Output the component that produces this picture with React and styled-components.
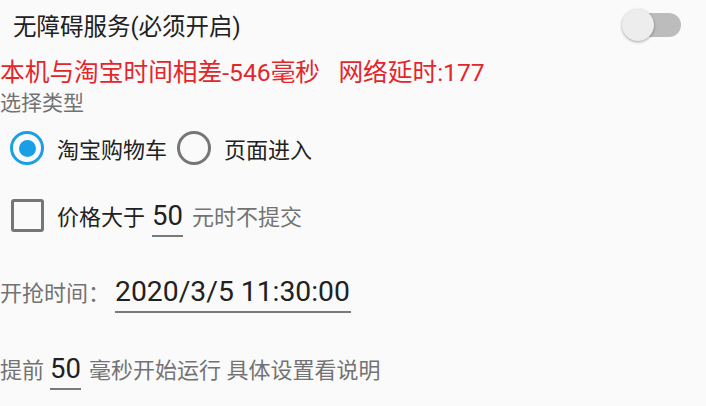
import React from "react";
import styled, { createGlobalStyle } from "styled-components";

const colors = {
  background: "#fafafa",
  text: "#212121",
  hint: "#737373",
  red: "#e3262b",
  accent: "#1a9fe6",
  control: "#767676",
  line: "#7a7a7a",
};

const GlobalStyle = createGlobalStyle`
  html, body {
    margin: 0;
    padding: 0;
    background: ${colors.background};
  }
  body {
    font-family: Roboto, "Noto Sans CJK SC", sans-serif;
    color: ${colors.text};
  }
`;

const Page = styled.div`
  width: 706px;
  height: 406px;
  display: flex;
  flex-direction: column;
  background: ${colors.background};
  overflow: hidden;
`;

const TitleRow = styled.div`
  display: flex;
  align-items: center;
  justify-content: space-between;
  height: 50px;
  padding: 0 24px 0 13px;
`;

const TitleText = styled.span`
  font-size: 23.5px;
  color: ${colors.text};
`;

const SwitchBox = styled.div`
  position: relative;
  width: 60px;
  height: 32px;
`;

const SwitchTrack = styled.div`
  position: absolute;
  left: 8px;
  top: 4px;
  width: 51px;
  height: 24px;
  border-radius: 12px;
  background: #bcbcbc;
`;

const SwitchThumb = styled.div`
  position: absolute;
  left: 0;
  top: 0;
  width: 32px;
  height: 32px;
  border-radius: 50%;
  background: #ededed;
  box-shadow: 0 1px 3px rgba(0, 0, 0, 0.35);
`;

const StatusLine = styled.div`
  margin-top: 8px;
  height: 30px;
  line-height: 30px;
  font-size: 24.7px;
  color: ${colors.red};
  white-space: pre;
`;

const SectionLabel = styled.div`
  height: 30px;
  line-height: 30px;
  font-size: 21px;
  color: ${colors.hint};
`;

const RadioGroup = styled.div`
  display: flex;
  align-items: center;
  gap: 10px;
  margin-top: 9px;
  height: 42px;
  padding-left: 10px;
`;

const RadioOption = styled.label`
  display: flex;
  align-items: center;
  gap: 13px;
  font-size: 22px;
  color: ${colors.text};
`;

const RadioCircle = styled.span`
  box-sizing: border-box;
  width: 34px;
  height: 34px;
  border-radius: 50%;
  border: 3.5px solid ${(p) => (p.checked ? colors.accent : colors.control)};
  display: flex;
  align-items: center;
  justify-content: center;
  &::after {
    content: "";
    width: 17px;
    height: 17px;
    border-radius: 50%;
    background: ${colors.accent};
    display: ${(p) => (p.checked ? "block" : "none")};
  }
`;

const FieldRow = styled.div`
  display: flex;
  align-items: baseline;
  margin-top: ${(p) => p.top}px;
  padding-left: ${(p) => p.left || 0}px;
  font-size: 22px;
`;

const CheckBox = styled.span`
  align-self: flex-start;
  box-sizing: border-box;
  width: 33px;
  height: 33px;
  border: 3.5px solid ${colors.control};
  border-radius: 3px;
  margin-right: 13px;
`;

const Plain = styled.span`
  color: ${(p) => (p.muted ? colors.hint : colors.text)};
  white-space: pre;
`;

// underlined text field, the way an Android EditText draws it
const InputField = styled.span`
  display: inline-block;
  box-sizing: content-box;
  width: ${(p) => p.width}px;
  margin: 0 ${(p) => p.after}px 0 ${(p) => p.before}px;
  padding-bottom: 3px;
  font-size: ${(p) => p.size || 27.5}px;
  line-height: 33px;
  color: ${colors.text};
  border-bottom: 2px solid ${colors.line};
  white-space: pre;
`;

export default function App() {
  return (
    <>
      <GlobalStyle />
      <Page>
        <TitleRow>
          <TitleText>无障碍服务(必须开启)</TitleText>
          <SwitchBox>
            <SwitchTrack />
            <SwitchThumb />
          </SwitchBox>
        </TitleRow>

        <StatusLine>本机与淘宝时间相差-546毫秒   网络延时:177</StatusLine>
        <SectionLabel>选择类型</SectionLabel>

        <RadioGroup>
          <RadioOption>
            <RadioCircle checked />
            淘宝购物车
          </RadioOption>
          <RadioOption>
            <RadioCircle />
            页面进入
          </RadioOption>
        </RadioGroup>

        <FieldRow top={30} left={11}>
          <CheckBox />
          <Plain>价格大于</Plain>
          <InputField width={31} before={7} after={9}>50</InputField>
          <Plain muted>元时不提交</Plain>
        </FieldRow>

        <FieldRow top={38}>
          <Plain muted>开抢时间：</Plain>
          <InputField width={236} before={5} after={0} size={28.3}>
            2020/3/5 11:30:00
          </InputField>
        </FieldRow>

        <FieldRow top={39}>
          <Plain muted>提前</Plain>
          <InputField width={31} before={6} after={8}>50</InputField>
          <Plain muted>毫秒开始运行 具体设置看说明</Plain>
        </FieldRow>
      </Page>
    </>
  );
}
